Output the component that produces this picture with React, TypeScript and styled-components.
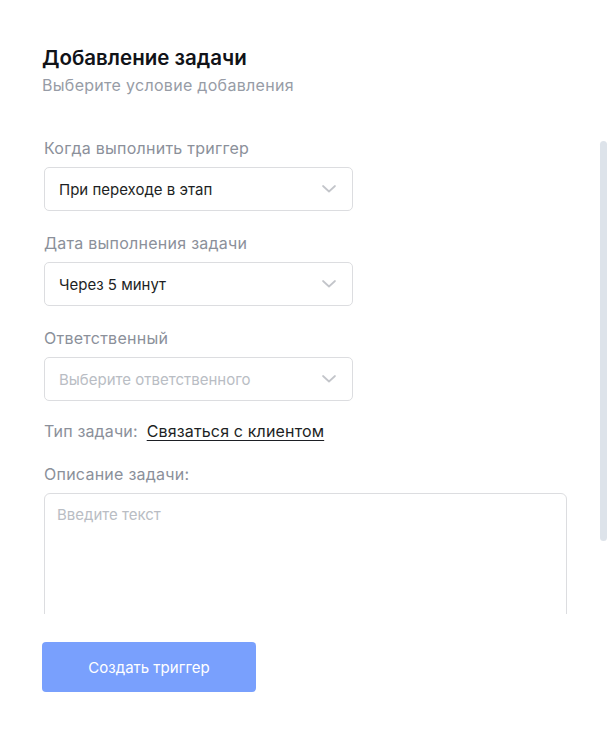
import React from 'react'
import styled, { createGlobalStyle } from 'styled-components'

const GlobalStyle = createGlobalStyle`
  html, body {
    margin: 0;
    padding: 0;
    background: #ffffff;
  }
  * {
    box-sizing: border-box;
  }
  body {
    font-family: Inter, 'Noto Sans', sans-serif;
  }
`

const Modal = styled.div`
  position: relative;
  width: 615px;
  height: 739px;
  background: #ffffff;
  border-top-right-radius: 6px;
  display: flex;
  flex-direction: column;
`

const Header = styled.div`
  padding: 46px 0 0 42px;
  display: flex;
  flex-direction: column;
`

const Title = styled.h2`
  margin: 0;
  font-size: 20.5px;
  line-height: 24px;
  font-weight: 600;
  color: #111318;
`

const Subtitle = styled.p`
  margin: 5px 0 0;
  font-size: 16px;
  line-height: 20px;
  letter-spacing: 0.3px;
  color: #979ca6;
`

const ScrollArea = styled.div`
  position: relative;
  margin-top: 16px;
  height: 503px;
  overflow: hidden;
  padding: 27px 48px 0 44px;
  display: flex;
  flex-direction: column;
`

const ScrollThumb = styled.div`
  position: absolute;
  top: 30px;
  right: 8px;
  width: 7px;
  height: 400px;
  border-radius: 4px;
  background: #dde3ea;
`

const Field = styled.div`
  display: flex;
  flex-direction: column;
  margin-bottom: 22px;
`

const Label = styled.label`
  font-size: 16px;
  line-height: 20px;
  letter-spacing: 0.25px;
  color: #8b909a;
  margin-bottom: 9px;
`

const Select = styled.div<{ $placeholder?: boolean }>`
  width: 309px;
  height: 44px;
  border: 1px solid #dcdde0;
  border-radius: 5px;
  display: flex;
  align-items: center;
  justify-content: space-between;
  padding: 0 15px 0 14px;
  font-size: 15px;
  color: ${({ $placeholder }) => ($placeholder ? '#b9bdc4' : '#1d1f24')};
`

const Chevron = () => (
  <svg width="16" height="10" viewBox="0 0 16 10" fill="none">
    <path d="M2 2 L8 7.5 L14 2" stroke="#c3c5ca" strokeWidth="1.7" strokeLinecap="round" strokeLinejoin="round" />
  </svg>
)

const TypeRow = styled.div`
  display: flex;
  align-items: center;
  gap: 9px;
  font-size: 16px;
  line-height: 20px;
  letter-spacing: 0.15px;
  color: #8b909a;
  margin: -2px 0 23px;
`

const TypeLink = styled.a`
  color: #1d1f24;
  text-decoration: underline;
  text-underline-offset: 3px;
  cursor: pointer;
`

const TextArea = styled.div`
  width: 523px;
  height: 160px;
  flex-shrink: 0;
  border: 1px solid #dcdde0;
  border-radius: 6px;
  padding: 12px 12px;
  font-size: 15px;
  line-height: 18px;
  color: #b9bdc4;
`

const Footer = styled.div`
  padding: 28px 0 0 42px;
`

const SubmitButton = styled.button`
  width: 214px;
  height: 50px;
  border: none;
  border-radius: 4px;
  background: #79a0fd;
  color: #ffffff;
  font-family: inherit;
  font-size: 15px;
  cursor: pointer;
`

const fields = [
  { label: 'Когда выполнить триггер', value: 'При переходе в этап' },
  { label: 'Дата выполнения задачи', value: 'Через 5 минут' },
  { label: 'Ответственный', value: 'Выберите ответственного', placeholder: true },
]

export default function App() {
  return (
    <>
      <GlobalStyle />
      <Modal>
        <Header>
          <Title>Добавление задачи</Title>
          <Subtitle>Выберите условие добавления</Subtitle>
        </Header>
        <ScrollArea>
          {fields.map((f) => (
            <Field key={f.label}>
              <Label>{f.label}</Label>
              <Select $placeholder={f.placeholder}>
                {f.value}
                <Chevron />
              </Select>
            </Field>
          ))}
          <TypeRow>
            Тип задачи:
            <TypeLink>Связаться с клиентом</TypeLink>
          </TypeRow>
          <Label>Описание задачи:</Label>
          <TextArea>Введите текст</TextArea>
          <ScrollThumb />
        </ScrollArea>
        <Footer>
          <SubmitButton>Создать триггер</SubmitButton>
        </Footer>
      </Modal>
    </>
  )
}
